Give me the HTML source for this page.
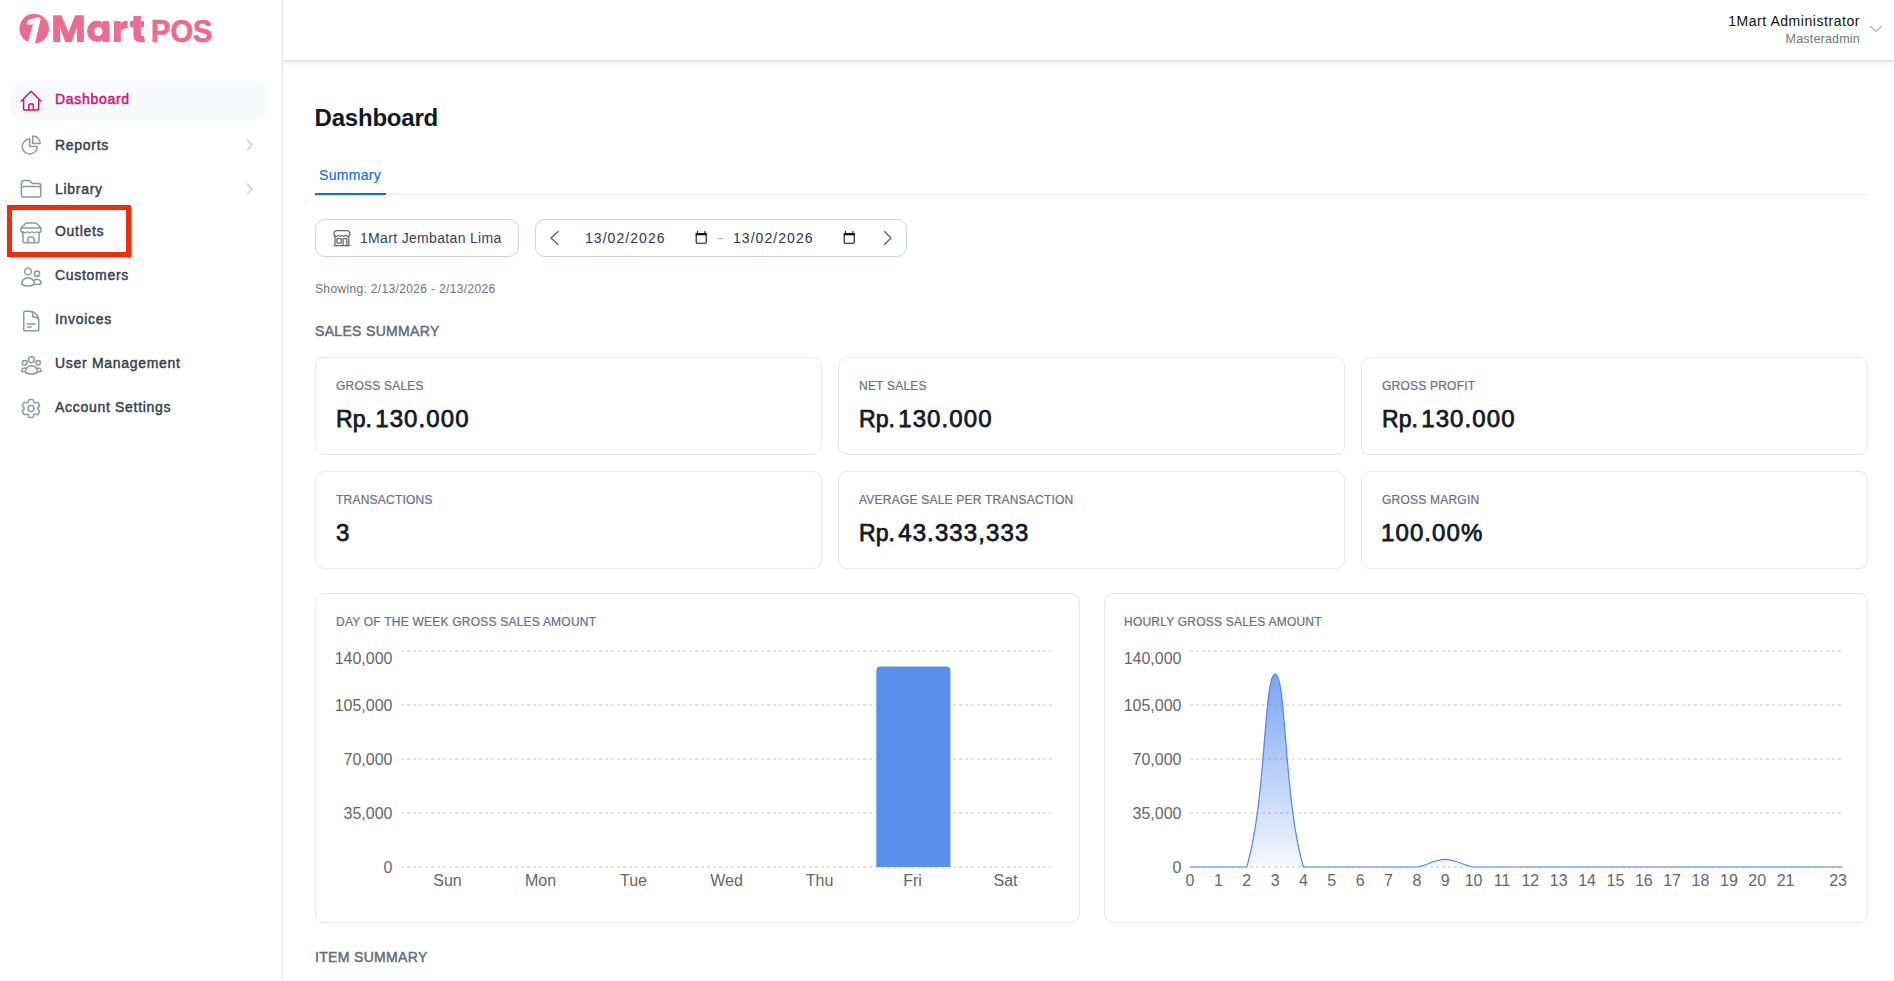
<!DOCTYPE html>
<html><head><meta charset="utf-8">
<style>
*{box-sizing:border-box;margin:0;padding:0}
html,body{width:1894px;height:981px;overflow:hidden;background:#fff;font-family:"Liberation Sans",sans-serif;color:#1f2937}
.a{position:absolute;white-space:nowrap;line-height:1}
#sb{position:absolute;left:0;top:0;width:283px;height:981px;border-right:1px solid #e6e8ee;background:#fff}
#hd{position:absolute;left:283px;top:0;width:1611px;height:62px;background:#fff;border-bottom:2px solid #e4e6ea;box-shadow:0 2px 3px rgba(0,0,0,.05)}
.nt{position:absolute;left:55px;font-size:14px;font-weight:normal;-webkit-text-stroke:.45px #334155;color:#334155;line-height:1;letter-spacing:.7px;white-space:nowrap}
.card{position:absolute;border:1px solid #e4e7ec;border-radius:9px;background:#fff}
.lbl{font-size:12px;color:#657084;letter-spacing:.22px;-webkit-text-stroke:.2px #657084}
.val{font-size:24px;font-weight:normal;-webkit-text-stroke:.75px #111827;color:#111827}
.sec{font-size:14px;font-weight:normal;-webkit-text-stroke:.45px #5f6b7e;color:#5f6b7e;letter-spacing:.33px}
svg{position:absolute;left:0;top:0;overflow:visible}
</style></head><body>
<div id="sb"></div>
<div id="hd"></div>

<!-- sidebar -->
<div class="a" style="left:11px;top:81px;width:255px;height:39px;border-radius:10px;background:#f8f9fb"></div>
<div class="nt" style="top:92px;color:#d90b78;-webkit-text-stroke-color:#d90b78">Dashboard</div>
<div class="nt" style="top:138px">Reports</div>
<div class="nt" style="top:182px">Library</div>
<div class="nt" style="top:224px">Outlets</div>
<div class="nt" style="top:268px">Customers</div>
<div class="nt" style="top:312px">Invoices</div>
<div class="nt" style="top:356px">User Management</div>
<div class="nt" style="top:400px">Account Settings</div>

<svg width="1894" height="981" viewBox="0 0 1894 981">
  <!-- logo -->
  <defs><clipPath id="lc"><circle cx="34.15" cy="28.6" r="14.75"/></clipPath></defs>
  <g fill="#ef6b8e">
    <circle cx="34.15" cy="28.6" r="14.75"/>
    <path clip-path="url(#lc)" fill="#fff" d="M26.5 24.6 L32.9 24.4 L27.3 44 L34.6 45 L40.7 18.9 Q40.2 16.9 37.6 17.2 L30.4 19.3 Q26.1 20.7 26.5 24.6Z"/>
    <path d="M53.2 41.9V15.3H61.4L68.5 32.2L75.1 15.3H83.8V41.9H76.9V27.4L71.6 41.9H65.3L60 27.4V41.9Z"/>
    <ellipse cx="96.9" cy="31.25" rx="9.9" ry="10.7"/>
    <rect x="102.5" y="21.1" width="6.6" height="20.8"/>
    <ellipse cx="98.3" cy="31.4" rx="4.2" ry="4.6" fill="#fff"/>
    <rect x="113.9" y="21.1" width="6.9" height="20.8"/>
    <path d="M120.6 23.6Q122.6 20.8 127.6 20.8V28.1Q122.4 28 120.6 32Z"/>
    <path d="M133.4 26.5V16.1H141.3Q140.8 17.3 140.8 21.1V34.3Q140.8 35.9 142.3 35.9H143.8L144.9 41.9H139.6Q133.4 41.9 133.4 35.8Z"/>
    <rect x="130" y="21.1" width="14" height="5.8"/>
    <text x="151" y="41.8" font-family="Liberation Sans" font-weight="bold" font-size="30.5" textLength="61.5" lengthAdjust="spacingAndGlyphs" stroke="#ef6b8e" stroke-width=".7">POS</text>
  </g>
  <!-- icons -->
  <g fill="none" stroke="#8c97a9" stroke-width="1.5" stroke-linecap="round" stroke-linejoin="round">
    <g transform="translate(19.1 89)" stroke="#d90b78"><path d="m2.25 12 8.954-8.955c.44-.439 1.152-.439 1.591 0L21.750 12M4.5 9.75v10.125c0 .621.504 1.125 1.125 1.125H9.75v-4.875c0-.621.504-1.125 1.125-1.125h2.25c.621 0 1.125.504 1.125 1.125V21h4.125c.621 0 1.125-.504 1.125-1.125V9.75M8.25 21h8.25"/></g>
    <g transform="translate(19.25 133)"><path d="M10.5 6a7.5 7.5 0 1 0 7.5 7.5h-7.5V6Z"/><path d="M13.5 10.5H21A7.5 7.5 0 0 0 13.5 3v7.5Z"/></g>
    <g transform="translate(19.1 176.8)"><path d="M2.25 12.75V12A2.25 2.25 0 0 1 4.5 9.75h15A2.25 2.25 0 0 1 21.75 12v.75m-8.69-6.44-2.12-2.12a1.5 1.5 0 0 0-1.061-.44H4.5A2.25 2.25 0 0 0 2.25 6v12a2.25 2.25 0 0 0 2.25 2.25h15A2.25 2.25 0 0 0 21.75 18V9a2.25 2.25 0 0 0-2.25-2.25h-5.379a1.5 1.5 0 0 1-1.06-.44Z"/></g>
    <!-- store -->
    <path d="M26 223 H36 L41 228 V231.3 Q40.5 232.3 39.5 232.3 M21 228 L26 223 M21 228 H41 M21 228 V231.3 Q21.5 232.3 22.5 232.3 M23 232.3 V241.3 Q23 242.8 24.5 242.8 H37.5 Q39 242.8 39 241.3 V232.3 M28 242.8 V239 Q28 237 30 237 H32 Q34 237 34 239 V242.8"/>
    <path d="M21.8 232.3 q1.15 -1 2.3 0 t2.3 0 t2.3 0 t2.3 0 t2.3 0 t2.3 0 t2.3 0 t2.3 0" stroke-width="1.2"/>
    <g transform="translate(19.4 265)"><path d="M15 19.128a9.38 9.38 0 0 0 2.625.372 9.337 9.337 0 0 0 4.121-.952 4.125 4.125 0 0 0-7.533-2.493M15 19.128v-.003c0-1.113-.285-2.16-.786-3.07M15 19.128v.106A12.318 12.318 0 0 1 8.624 21c-2.331 0-4.512-.645-6.374-1.766l-.001-.109a6.375 6.375 0 0 1 11.964-3.070M12 6.375a3.375 3.375 0 1 1-6.75 0 3.375 3.375 0 0 1 6.75 0Zm8.25 2.25a2.625 2.625 0 1 1-5.25 0 2.625 2.625 0 0 1 5.25 0Z"/></g>
    <g transform="translate(19.25 309.1)"><path d="M19.5 14.25v-2.625a3.375 3.375 0 0 0-3.375-3.375h-1.5A1.125 1.125 0 0 1 13.5 7.125v-1.5a3.375 3.375 0 0 0-3.375-3.375H8.25m0 12.75h7.5m-7.5 3H12M10.5 2.25H5.625c-.621 0-1.125.504-1.125 1.125v17.25c0 .621.504 1.125 1.125 1.125h12.75c.621 0 1.125-.504 1.125-1.125V11.25a9 9 0 0 0-9-9Z"/></g>
    <g transform="translate(19.4 353.1)"><path d="M18 18.72a9.094 9.094 0 0 0 3.741-.479 3 3 0 0 0-4.682-2.720m.94 3.198.001.031c0 .225-.012.447-.037.666A11.944 11.944 0 0 1 12 21c-2.170 0-4.207-.576-5.963-1.584A6.062 6.062 0 0 1 6 18.719m12 0a5.971 5.971 0 0 0-.941-3.197m0 0A5.995 5.995 0 0 0 12 12.75a5.995 5.995 0 0 0-5.058 2.772m0 0a3 3 0 0 0-4.681 2.720 8.986 8.986 0 0 0 3.740.477m.94-3.197a5.971 5.971 0 0 0-.94 3.197M15 6.75a3 3 0 1 1-6 0 3 3 0 0 1 6 0Zm6 3a2.25 2.25 0 1 1-4.5 0 2.25 2.25 0 0 1 4.5 0Zm-13.5 0a2.25 2.25 0 1 1-4.5 0 2.25 2.25 0 0 1 4.5 0Z"/></g>
    <g transform="translate(19 396.5)"><path d="M9.594 3.94c.09-.542.56-.94 1.11-.94h2.593c.55 0 1.02.398 1.11.94l.213 1.281c.063.374.313.686.645.87.074.04.147.083.22.127.325.196.72.257 1.075.124l1.217-.456a1.125 1.125 0 0 1 1.370.490l1.296 2.247a1.125 1.125 0 0 1-.26 1.431l-1.003.827c-.293.241-.438.613-.43.992a7.723 7.723 0 0 1 0 .255c-.008.378.137.750.43.991l1.004.827c.424.350.534.955.26 1.430l-1.298 2.247a1.125 1.125 0 0 1-1.369.491l-1.217-.456c-.355-.133-.75-.072-1.076.124a6.47 6.47 0 0 1-.22.128c-.331.183-.581.495-.644.869l-.213 1.281c-.09.543-.56.94-1.11.94h-2.594c-.55 0-1.019-.398-1.11-.94l-.213-1.281c-.062-.374-.312-.686-.644-.870a6.52 6.52 0 0 1-.22-.127c-.325-.196-.72-.257-1.076-.124l-1.217.456a1.125 1.125 0 0 1-1.369-.490l-1.297-2.247a1.125 1.125 0 0 1 .26-1.431l1.004-.827c.292-.24.437-.613.43-.991a6.932 6.932 0 0 1 0-.255c.007-.38-.138-.751-.43-.992l-1.004-.827a1.125 1.125 0 0 1-.26-1.430l1.297-2.247a1.125 1.125 0 0 1 1.370-.491l1.216.456c.356.133.751.072 1.076-.124.072-.044.146-.086.22-.128.332-.183.582-.495.644-.869l.214-1.280Z"/><path d="M15 12a3 3 0 1 1-6 0 3 3 0 0 1 6 0Z"/></g>
  </g>
  <!-- nav chevrons -->
  <g fill="none" stroke="#c5ccd6" stroke-width="1.2" stroke-linecap="round" stroke-linejoin="round">
    <path d="M247.2 140 L252 145 L247.2 150"/>
    <path d="M247.2 184 L252 189 L247.2 194"/>
  </g>
  <!-- red box -->
  <rect x="9.5" y="207.5" width="119" height="47" fill="none" stroke="#f52a06" stroke-width="5"/>
  <!-- header chevron -->
  <path d="M1870.3 26.4 L1876 31.2 L1881.7 26.4" fill="none" stroke="#9aa4b3" stroke-width="1.1" stroke-linecap="round" stroke-linejoin="round"/>
</svg>

<!-- header -->
<div class="a" style="left:1600px;width:260px;text-align:right;top:14px;font-size:14px;color:#111;letter-spacing:.55px">1Mart Administrator</div>
<div class="a" style="left:1600px;width:260px;text-align:right;top:33px;font-size:12.5px;color:#6b7689;letter-spacing:.2px">Masteradmin</div>

<!-- main -->
<div class="a" style="left:314.5px;top:106px;font-size:24px;font-weight:bold;color:#111827;letter-spacing:-.2px">Dashboard</div>
<div class="a" style="left:315px;top:194px;width:1553px;height:1px;background:#e5e7eb"></div>
<div class="a" style="left:319px;top:168px;font-size:14px;color:#0a6cf5;letter-spacing:.3px;-webkit-text-stroke:.15px #0a6cf5">Summary</div>
<div class="a" style="left:315px;top:193px;width:71px;height:2px;background:#0a6cf5"></div>

<div class="a" style="left:315px;top:219px;width:204px;height:38px;border:1px solid #cdd3dc;border-radius:10px"></div>
<div class="a" style="left:535px;top:219px;width:372px;height:38px;border:1px solid #cdd3dc;border-radius:10px"></div>
<div class="a" style="left:360px;top:231px;font-size:14px;color:#374151;letter-spacing:.33px">1Mart Jembatan Lima</div>
<div class="a" style="left:585px;top:231px;font-size:14px;color:#2b3648;letter-spacing:1.05px">13/02/2026</div>
<div class="a" style="left:733px;top:231px;font-size:14px;color:#2b3648;letter-spacing:1.05px">13/02/2026</div>
<div class="a" style="left:718px;top:231px;font-size:14px;color:#9aa3b0">-</div>

<svg width="1894" height="981" viewBox="0 0 1894 981">
  <g transform="translate(331.9 228.1) scale(.8333)" fill="none" stroke="#5b6678" stroke-width="1.5" stroke-linecap="round" stroke-linejoin="round"><path d="M13.5 21v-7.5a.75.75 0 0 1 .75-.75h3a.75.75 0 0 1 .75.75V21m-4.5 0H2.36m11.14 0H18m0 0h3.64m-1.39 0V9.349M3.75 21V9.349m0 0a3.001 3.001 0 0 0 3.75-.615A2.993 2.993 0 0 0 9.75 9.750c.896 0 1.7-.393 2.25-1.016a2.993 2.993 0 0 0 2.25 1.016c.896 0 1.7-.393 2.25-1.016a3.001 3.001 0 0 0 3.75.614m-16.5 0a3.004 3.004 0 0 1-.621-4.720l1.189-1.190A1.5 1.5 0 0 1 5.378 3h13.243a1.5 1.5 0 0 1 1.06.44l1.19 1.189a3 3 0 0 1-.621 4.720M6.75 18h3.75a.75.75 0 0 0 .75-.75V13.5a.75.75 0 0 0-.75-.75H6.75a.75.75 0 0 0-.75.75v3.75c0 .414.336.75.75.75Z"/></g>
  <g fill="none" stroke="#515c6c" stroke-width="1.3" stroke-linecap="round" stroke-linejoin="round">
    <path d="M558 231.5 L551 238 L558 244.5"/>
    <path d="M884.5 231.5 L891 238 L884.5 244.5"/>
  </g>
  <g fill="none" stroke="#111" stroke-width="1.1">
    <rect x="696.2" y="233.6" width="10" height="9.6" rx="0.8"/>
    <rect x="844.2" y="233.6" width="10" height="9.6" rx="0.8"/>
  </g>
  <g fill="#111">
    <rect x="695.7" y="233" width="11" height="2.3"/>
    <rect x="697" y="231" width="1.1" height="2.5"/><rect x="704.3" y="231" width="1.1" height="2.5"/>
    <rect x="843.7" y="233" width="11" height="2.3"/>
    <rect x="845" y="231" width="1.1" height="2.5"/><rect x="852.3" y="231" width="1.1" height="2.5"/>
  </g>
</svg>

<div class="a" style="left:315px;top:283px;font-size:12px;color:#6b7280;letter-spacing:.35px">Showing: 2/13/2026 - 2/13/2026</div>
<div class="a sec" style="left:315px;top:324px">SALES SUMMARY</div>

<div class="card" style="left:315px;top:357px;width:507px;height:98px"></div>
<div class="card" style="left:838px;top:357px;width:507px;height:98px"></div>
<div class="card" style="left:1361px;top:357px;width:507px;height:98px"></div>
<div class="card" style="left:315px;top:471px;width:507px;height:98px"></div>
<div class="card" style="left:838px;top:471px;width:507px;height:98px"></div>
<div class="card" style="left:1361px;top:471px;width:507px;height:98px"></div>
<div class="a lbl" style="left:336px;top:380px">GROSS SALES</div>
<div class="a lbl" style="left:859px;top:380px">NET SALES</div>
<div class="a lbl" style="left:1382px;top:380px">GROSS PROFIT</div>
<div class="a lbl" style="left:336px;top:494px">TRANSACTIONS</div>
<div class="a lbl" style="left:859px;top:494px">AVERAGE SALE PER TRANSACTION</div>
<div class="a lbl" style="left:1382px;top:494px">GROSS MARGIN</div>
<div class="a val" style="left:336px;top:407px"><span style="display:inline-block;transform:scaleX(.96);transform-origin:0 0;margin-right:-1.45px">Rp.</span><span style="letter-spacing:1.1px;margin-left:3.3px">130.000</span></div>
<div class="a val" style="left:859px;top:407px"><span style="display:inline-block;transform:scaleX(.96);transform-origin:0 0;margin-right:-1.45px">Rp.</span><span style="letter-spacing:1.1px;margin-left:3.3px">130.000</span></div>
<div class="a val" style="left:1382px;top:407px"><span style="display:inline-block;transform:scaleX(.96);transform-origin:0 0;margin-right:-1.45px">Rp.</span><span style="letter-spacing:1.1px;margin-left:3.3px">130.000</span></div>
<div class="a val" style="left:336px;top:521px">3</div>
<div class="a val" style="left:859px;top:521px"><span style="display:inline-block;transform:scaleX(.96);transform-origin:0 0;margin-right:-1.45px">Rp.</span><span style="letter-spacing:1.1px;margin-left:3.3px">43.333,333</span></div>
<div class="a val" style="left:1381px;top:521px"><span style="letter-spacing:1.1px">100.00%</span></div>

<div class="card" style="left:315px;top:593px;width:765px;height:330px"></div>
<div class="card" style="left:1104px;top:593px;width:764px;height:330px"></div>
<div class="a lbl" style="left:336px;top:616px">DAY OF THE WEEK GROSS SALES AMOUNT</div>
<div class="a lbl" style="left:1124px;top:616px">HOURLY GROSS SALES AMOUNT</div>

<svg width="1894" height="981" viewBox="0 0 1894 981">
  <defs>
    <linearGradient id="gf" x1="0" y1="651" x2="0" y2="867" gradientUnits="userSpaceOnUse">
      <stop offset="0" stop-color="#5b8ff0" stop-opacity=".9"/>
      <stop offset="1" stop-color="#5b8ff0" stop-opacity=".06"/>
    </linearGradient>
  </defs>
  <g stroke="#dcdcdc" stroke-width="1.5" stroke-dasharray="3 3">
    <path d="M401 651H1052M401 705H1052M401 759H1052M401 813H1052M401 867H1052"/>
    <path d="M1190 651H1842M1190 705H1842M1190 759H1842M1190 813H1842M1190 867H1842"/>
  </g>
  <path d="M876.3 867 V670.4 Q876.3 666.4 880.3 666.4 H946.4 Q950.4 666.4 950.4 670.4 V867Z" fill="#5a8ff0"/>
  <path d="M1190 867 L1246.72 867 C1266.53 799.66 1263.74 674.14 1275.08 674.14 C1286.43 674.14 1283.64 799.66 1303.44 867 L1416.89 867 C1428.43 865.43 1433.90 859.29 1445.25 859.29 C1456.59 859.29 1462.06 865.43 1473.61 867 L1842.3 867Z" fill="url(#gf)"/>
  <path d="M1190 867 L1246.72 867 C1266.53 799.66 1263.74 674.14 1275.08 674.14 C1286.43 674.14 1283.64 799.66 1303.44 867 L1416.89 867 C1428.43 865.43 1433.90 859.29 1445.25 859.29 C1456.59 859.29 1462.06 865.43 1473.61 867 L1842.3 867" fill="none" stroke="#4f88ee" stroke-width="1.2"/>
  <g font-family="Liberation Sans" font-size="16" fill="#666" text-anchor="end">
    <text x="392.5" y="663.8">140,000</text>
    <text x="392.5" y="710.8">105,000</text>
    <text x="392.5" y="764.8">70,000</text>
    <text x="392.5" y="818.8">35,000</text>
    <text x="392.5" y="872.8">0</text>
    <text x="1181.5" y="663.8">140,000</text>
    <text x="1181.5" y="710.8">105,000</text>
    <text x="1181.5" y="764.8">70,000</text>
    <text x="1181.5" y="818.8">35,000</text>
    <text x="1181.5" y="872.8">0</text>
  </g>
  <g font-family="Liberation Sans" font-size="16" fill="#666" text-anchor="middle">
    <text x="447.5" y="886">Sun</text><text x="540.5" y="886">Mon</text><text x="633.5" y="886">Tue</text><text x="726.5" y="886">Wed</text><text x="819.5" y="886">Thu</text><text x="912.5" y="886">Fri</text><text x="1005.5" y="886">Sat</text>
  </g>
  <g font-family="Liberation Sans" font-size="16" fill="#666" text-anchor="middle"><text x="1190.0" y="886">0</text><text x="1218.4" y="886">1</text><text x="1246.7" y="886">2</text><text x="1275.1" y="886">3</text><text x="1303.4" y="886">4</text><text x="1331.8" y="886">5</text><text x="1360.2" y="886">6</text><text x="1388.5" y="886">7</text><text x="1416.9" y="886">8</text><text x="1445.2" y="886">9</text><text x="1473.6" y="886">10</text><text x="1502.0" y="886">11</text><text x="1530.3" y="886">12</text><text x="1558.7" y="886">13</text><text x="1587.1" y="886">14</text><text x="1615.4" y="886">15</text><text x="1643.8" y="886">16</text><text x="1672.1" y="886">17</text><text x="1700.5" y="886">18</text><text x="1728.9" y="886">19</text><text x="1757.2" y="886">20</text><text x="1785.6" y="886">21</text><text x="1838.1" y="886">23</text></g>
</svg>

<div class="a sec" style="left:315px;top:950px">ITEM SUMMARY</div>
</body></html>
